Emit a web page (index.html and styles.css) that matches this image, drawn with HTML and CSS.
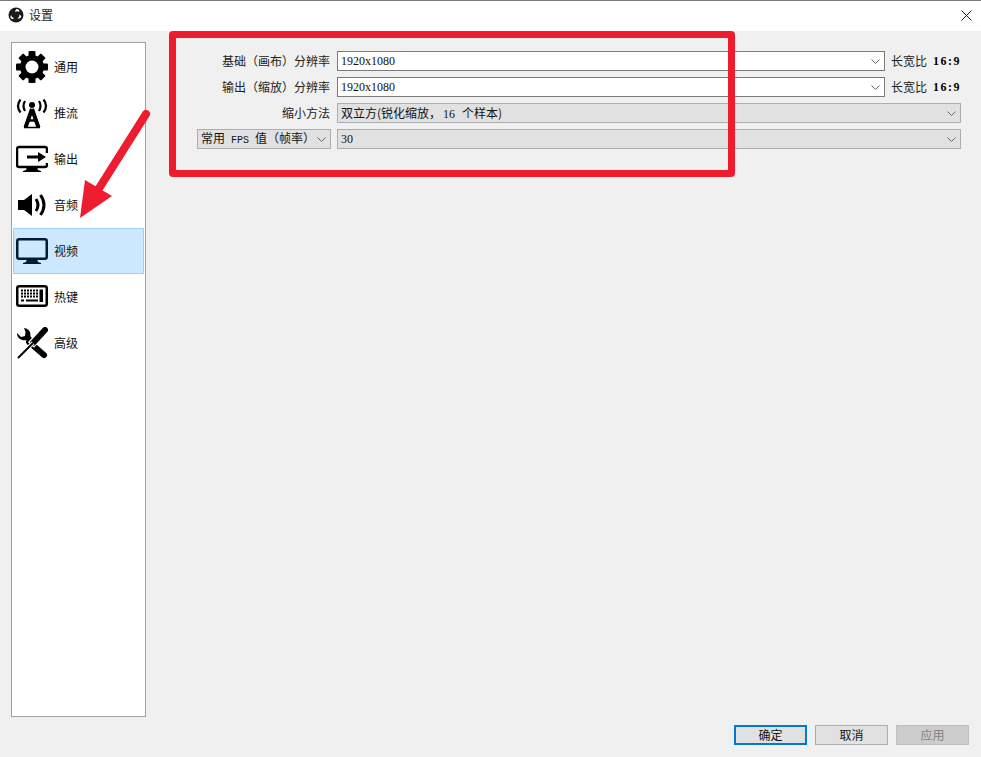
FILE: index.html
```html
<!DOCTYPE html>
<html lang="zh">
<head>
<meta charset="utf-8">
<title>设置</title>
<link rel="stylesheet" href="styles.css">
</head>
<body>
<div class="window">
  <header class="titlebar">
    <svg class="app-icon" viewBox="0 0 16 16"><circle cx="8" cy="8" r="7.500" fill="#1b1b1b"/><path d="M8.500 2a3 3 0 0 1 2.900 3 3.400 3.400 0 0 0-4.200.2A3.400 3.400 0 0 1 8.500 2zM13.400 9.800a3 3 0 0 1-4 1.400 3.400 3.400 0 0 0 2-3.700 3.400 3.400 0 0 1 2 2.300zM4 12.200a3 3 0 0 1-.9-4.200A3.400 3.400 0 0 0 6 10.900 3.400 3.400 0 0 1 4 12.200z" fill="#fff"/></svg>
    <span class="title">设置</span>
    <svg class="close" viewBox="0 0 11 11"><path d="M.5.5l10 10M10.500.5l-10 10" stroke="#222" fill="none"/></svg>
  </header>

  <div class="content">
    <nav class="sidebar">
      <div class="nav-item">
        <svg class="nav-icon" viewBox="0 0 32 32"><g fill="#000"><rect x="12.500" y="0" width="7" height="32" rx="1"/><rect x="12.500" y="0" width="7" height="32" rx="1" transform="rotate(45 16 16)"/><rect x="12.500" y="0" width="7" height="32" rx="1" transform="rotate(90 16 16)"/><rect x="12.500" y="0" width="7" height="32" rx="1" transform="rotate(135 16 16)"/></g><circle cx="16" cy="16" r="12" fill="#000"/><circle cx="16" cy="16" r="6.500" fill="#fff"/></svg>
        <span>通用</span>
      </div>
      <div class="nav-item">
        <svg class="nav-icon" viewBox="0 0 32 32"><circle cx="16" cy="8" r="3" fill="#000"/><path d="M9 4Q6 9 9 14M4.500 2.500Q-.5 9 4.500 15.500M23 4Q26 9 23 14M27.500 2.500Q32.500 9 27.500 15.500" fill="none" stroke="#000" stroke-width="2.200"/><path d="M16 12L9.500 30.500M16 12L22.500 30.500" fill="none" stroke="#000" stroke-width="4"/><path d="M11 23.500H21" stroke="#000" stroke-width="2.500"/><path d="M8 30.500H24" stroke="#000" stroke-width="1.500"/></svg>
        <span>推流</span>
      </div>
      <div class="nav-item">
        <svg class="nav-icon" viewBox="0 0 32 32"><path d="M31 10V6a2 2 0 0 0-2-2H3a2 2 0 0 0-2 2v16a2 2 0 0 0 2 2h26a2 2 0 0 0 2-2v-2" fill="none" stroke="#000" stroke-width="2.500"/><path d="M11 24h10l1 3 3 1v1H7v-1l3-1z" fill="#000"/><path d="M11 12.500h11V9l8 5-8 5v-3.500H11z" fill="#000"/></svg>
        <span>输出</span>
      </div>
      <div class="nav-item">
        <svg class="nav-icon" viewBox="0 0 32 32"><path d="M2 11h6l8-6v22l-8-6H2z" fill="#000"/><path d="M20 10q4 6 0 12M24.500 6q7 10 0 20" fill="none" stroke="#000" stroke-width="3"/></svg>
        <span>音频</span>
      </div>
      <div class="nav-item is-active">
        <svg class="nav-icon" viewBox="0 0 32 32"><rect x="1.250" y="4.250" width="29.500" height="19.500" rx="2" fill="none" stroke="#001a2e" stroke-width="2.500"/><path d="M11 24h10l1 3 3 1v1H7v-1l3-1z" fill="#001a2e"/></svg>
        <span>视频</span>
      </div>
      <div class="nav-item">
        <svg class="nav-icon" viewBox="0 0 32 32"><rect x="1.250" y="5.250" width="29.500" height="19.500" rx="2" fill="none" stroke="#000" stroke-width="2.500"/><path d="M5 9.500H22M5 12.500H22M5 15.500H22" stroke="#000" stroke-width="2" stroke-dasharray="2 1"/><path d="M5 19.500H8M10 19.500H22M24 19.500H27" stroke="#000" stroke-width="2"/><path d="M23.500 8.500H27V21H23.500z" fill="#000"/></svg>
        <span>热键</span>
      </div>
      <div class="nav-item">
        <svg class="nav-icon" viewBox="0 0 32 32"><path d="M13 15L28 28" stroke="#000" stroke-width="6" stroke-linecap="round"/><path d="M8 1a7 7 0 0 1 6.500 8.500l2 2-3.500 4-3-2.500A7 7 0 0 1 1 6l4 4 4-1 .5-4z" fill="#000"/><path d="M29 2L15 18" stroke="#fff" stroke-width="8"/><path d="M29 3L17 16" stroke="#000" stroke-width="6" stroke-linecap="round"/><path d="M17 16L2 31" stroke="#fff" stroke-width="4"/><path d="M17 16L2 31" stroke="#000" stroke-width="2"/></svg>
        <span>高级</span>
      </div>
    </nav>

    <main class="main">
      <div class="form">
        <label class="label">基础（画布）分辨率</label>
        <div class="combo">
          <span class="num">1920x1080</span>
          <svg class="chevron" viewBox="0 0 9 5"><path d="M.5.500L4.500 4.500 8.500.500" fill="none" stroke="#666"/></svg>
        </div>
        <div class="aspect">长宽比 <b>16:9</b></div>

        <label class="label">输出（缩放）分辨率</label>
        <div class="combo">
          <span class="num">1920x1080</span>
          <svg class="chevron" viewBox="0 0 9 5"><path d="M.5.500L4.500 4.500 8.500.500" fill="none" stroke="#666"/></svg>
        </div>
        <div class="aspect">长宽比 <b>16:9</b></div>

        <label class="label">缩小方法</label>
        <div class="combo combo-flat combo-wide">
          <span>双立方(锐化缩放，<span class="num num-gap">16</span>个样本)</span>
          <svg class="chevron" viewBox="0 0 9 5"><path d="M.5.500L4.500 4.500 8.500.500" fill="none" stroke="#666"/></svg>
        </div>

        <div class="combo combo-flat combo-fps">
          <span>常用<span class="mono">FPS</span>值（帧率）</span>
          <svg class="chevron" viewBox="0 0 9 5"><path d="M.5.500L4.500 4.500 8.500.500" fill="none" stroke="#666"/></svg>
        </div>
        <div class="combo combo-flat combo-wide">
          <span class="num">30</span>
          <svg class="chevron" viewBox="0 0 9 5"><path d="M.5.500L4.500 4.500 8.500.500" fill="none" stroke="#666"/></svg>
        </div>
      </div>
    </main>
  </div>

  <footer class="footer">
    <button class="btn btn-default">确定</button>
    <button class="btn">取消</button>
    <button class="btn btn-disabled">应用</button>
  </footer>
</div>

<div class="mark-box"></div>
<svg class="mark-arrow" viewBox="0 0 160 230"><path d="M146 114L98 190" stroke="#ed1c2e" stroke-width="8" stroke-linecap="round"/><path d="M80 218L85 180 112 196z" fill="#ed1c2e"/></svg>
</body>
</html>
```
FILE: styles.css
```css
* { box-sizing: border-box; }
html, body { margin: 0; height: 100%; }
body {
  position: relative;
  overflow: hidden;
  background: #f0f0f0;
  color: #111;
  font: 12px/16px "Noto Sans CJK SC", "Liberation Sans", sans-serif;
}
.window { display: flex; flex-direction: column; height: 757px; }

.titlebar {
  display: flex;
  align-items: center;
  height: 31px;
  flex: none;
  padding: 0 9px 2px 8px;
  background: #fff;
  border-top: 1px solid #7a7a7a;
}
.app-icon { width: 16px; height: 16px; flex: none; }
.title { margin-left: 5px; color: #222; }
.close { width: 11px; height: 11px; margin-left: auto; }

.content { display: flex; flex: 1; min-height: 0; padding: 11px 20px 0 11px; }

.sidebar {
  width: 135px;
  height: 675px;
  flex: none;
  padding: 1px;
  background: #fff;
  border: 1px solid #a0a0a0;
}
.nav-item {
  display: flex;
  align-items: center;
  gap: 6px;
  height: 46px;
  padding-left: 3px;
}
.nav-item.is-active { background: #cce8ff; border: 1px solid #99d1ff; padding-left: 2px; }
.nav-icon { width: 32px; height: 32px; flex: none; }

.main { flex: 1; min-width: 0; padding: 9px 0 0 51px; }
.form {
  display: grid;
  grid-template-columns: 134px 548px 70px;
  grid-auto-rows: 20px;
  gap: 6px;
}
.label { align-self: center; padding-right: 1px; text-align: right; color: #222; }

.combo {
  display: flex;
  align-items: center;
  justify-content: space-between;
  padding: 0 4px 0 3px;
  background: #fff;
  border: 1px solid #7a7a7a;
  white-space: nowrap;
}
.combo-flat { background: #e1e1e1; border-color: #adadad; padding-left: 3px; }
.combo-wide { grid-column: 2 / span 2; }
.chevron { width: 9px; height: 5px; flex: none; }
.num { font-family: "Liberation Serif", serif; }
.num-gap { margin: 0 7px 0 2px; }
.mono { margin: 0 6px; font-family: "Liberation Mono", monospace; font-size: 10px; }

.aspect { display: flex; align-items: center; justify-content: space-between; color: #222; white-space: nowrap; }
.aspect b { font-family: "Liberation Serif", serif; font-size: 12px; letter-spacing: 1.500px; color: #000; }

.footer { display: flex; justify-content: flex-end; gap: 8px; flex: none; height: 32px; padding: 0 12px 12px 0; }
.btn {
  width: 73px;
  height: 20px;
  padding: 0;
  font: inherit;
  color: #111;
  background: #e1e1e1;
  border: 1px solid #adadad;
}
.btn-default { border: 2px solid #0078d7; }
.btn-disabled { background: #ccc; border-color: #bfbfbf; color: #838383; }

.mark-box {
  position: absolute;
  left: 169px;
  top: 31px;
  width: 566px;
  height: 146px;
  border: 7px solid #ed1c2e;
  border-radius: 4px;
}
.mark-arrow { position: absolute; left: 0; top: 0; width: 160px; height: 230px; }
```
